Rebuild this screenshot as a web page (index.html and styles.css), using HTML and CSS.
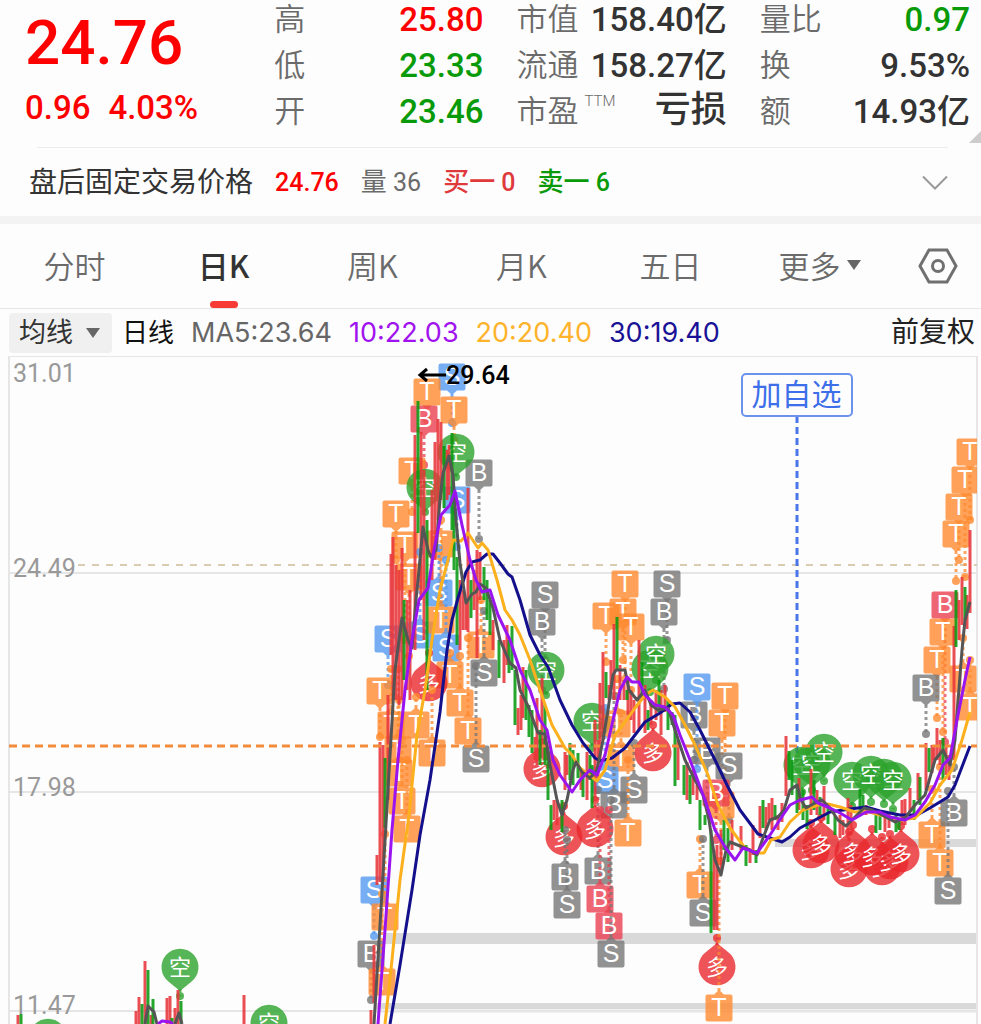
FILE: index.html
```html
<!DOCTYPE html>
<html lang="zh-CN">
<head>
<meta charset="utf-8">
<meta name="viewport" content="width=device-width, initial-scale=1">
<title>日K 行情</title>
<link rel="stylesheet" href="styles.css">
</head>
<body>
<main class="page">
  <section class="quote">
    <div class="price">
      <div class="price-now">24.76</div>
      <div class="price-change"><span>0.96</span><span>4.03%</span></div>
    </div>
    <dl class="stats">
      <div class="stat"><dt>高</dt><dd class="up">25.80</dd></div>
      <div class="stat"><dt>低</dt><dd class="down">23.33</dd></div>
      <div class="stat"><dt>开</dt><dd class="down">23.46</dd></div>
    </dl>
    <dl class="stats">
      <div class="stat"><dt>市值</dt><dd>158.40亿</dd></div>
      <div class="stat"><dt>流通</dt><dd>158.27亿</dd></div>
      <div class="stat"><dt>市盈<sup class="ttm">TTM</sup></dt><dd class="word">亏损</dd></div>
    </dl>
    <dl class="stats">
      <div class="stat"><dt>量比</dt><dd class="down">0.97</dd></div>
      <div class="stat"><dt>换</dt><dd>9.53%</dd></div>
      <div class="stat"><dt>额</dt><dd>14.93亿</dd></div>
    </dl>
    <svg class="corner" viewBox="0 0 12 12" aria-hidden="true"><path d="M12 0V12H0Z"/></svg>
  </section>

  <section class="after">
    <span class="after-title">盘后固定交易价格</span>
    <span class="up">24.76</span>
    <span class="volume"><span class="han">量</span> 36</span>
    <span class="bid"><span class="han">买一</span> 0</span>
    <span class="down"><span class="han">卖一</span> 6</span>
    <button class="expand" type="button" aria-label="展开">
      <svg viewBox="0 0 26 16" aria-hidden="true"><path d="M1 1.500L13 13.500L25 1.500"/></svg>
    </button>
  </section>

  <nav class="tabs">
    <button class="tab" type="button">分时</button>
    <button class="tab active" type="button">日K</button>
    <button class="tab" type="button">周K</button>
    <button class="tab" type="button">月K</button>
    <button class="tab" type="button">五日</button>
    <button class="tab" type="button">更多<i class="caret"></i></button>
    <button class="settings" type="button" aria-label="设置">
      <svg viewBox="0 0 40 36" aria-hidden="true"><path d="M11 2H29L38 18L29 34H11L2 18Z"/><circle cx="20" cy="18" r="5.500"/></svg>
    </button>
  </nav>

  <section class="legend">
    <label class="picker">
      <select class="picker-select" aria-label="指标"><option>均线</option></select>
      <i class="caret"></i>
    </label>
    <span class="period">日线</span>
    <span class="ma ma5">MA5:23.64</span>
    <span class="ma ma10">10:22.03</span>
    <span class="ma ma20">20:20.40</span>
    <span class="ma ma30">30:19.40</span>
    <span class="adjust">前复权</span>
  </section>

  <section class="chart">
    <svg class="chart-svg" id="chart" viewBox="0 356 981 668" role="img" aria-label="日K线图"></svg>
    <button class="watch" type="button">加自选</button>
  </section>
</main>
<script src="chart.js"></script>
</body>
</html>
```
FILE: styles.css
```css
* { box-sizing: border-box; }

body {
  margin: 0;
  background: #fdfdfd;
  color: #333;
  font-family: Roboto, "Noto Sans CJK SC", sans-serif;
}

button, select {
  margin: 0;
  padding: 0;
  border: 0;
  background: none;
  color: inherit;
  font: inherit;
}

.page { overflow: hidden; }

.up { color: #fe0000; }
.down { color: #089a08; }

.quote {
  position: relative;
  display: grid;
  grid-template-columns: 216fr 209fr 210fr 210fr;
  column-gap: 33px;
  height: 147px;
  padding: 0 11px 0 25px;
}

.price {
  color: #fe0000;
  font-weight: 500;
  white-space: nowrap;
}

.price-now {
  padding-top: 8px;
  font-size: 62px;
  line-height: 70px;
}

.price-change {
  display: flex;
  gap: 18px;
  padding-top: 10px;
  font-size: 33px;
  line-height: 40px;
}

.stats {
  display: grid;
  grid-auto-rows: 40px;
  row-gap: 6px;
  align-content: start;
  margin: 0;
}

.stat {
  display: flex;
  justify-content: space-between;
  font-size: 33px;
  line-height: 40px;
  white-space: nowrap;
}

.stat dt {
  color: #6b6b6b;
  font-size: 31px;
  font-weight: 350;
}

.stat dd {
  margin: 0;
  font-weight: 500;
}

.stat .word { font-size: 36px; line-height: 36px; }

.ttm {
  padding-left: 6px;
  font-size: 15px;
  line-height: 14px;
  vertical-align: 16px;
}

.corner {
  position: absolute;
  right: 0;
  bottom: 4px;
  width: 12px;
  height: 12px;
  fill: #ccc;
}

.after {
  display: flex;
  align-items: center;
  gap: 22px;
  height: 77px;
  padding: 2px 33px 0 29px;
  border-bottom: 8px solid #f3f3f3;
  background: linear-gradient(#ececec, #ececec) 37px 0 / calc(100% - 70px) 1px no-repeat;
  font-size: 25px;
  font-weight: 500;
  line-height: 36px;
  white-space: nowrap;
}

.after-title { font-size: 28px; font-weight: 400; }
.han { font-size: 26px; }
.volume { color: #6b6b6b; font-weight: 400; }
.bid { color: #e0393c; }

.expand { margin-left: auto; }
.expand svg {
  display: block;
  width: 26px;
  height: 16px;
  fill: none;
  stroke: #999;
  stroke-width: 2;
}

.tabs {
  display: grid;
  grid-template-columns: repeat(6, 149fr) 87fr;
  height: 85px;
  border-bottom: 1px solid #e6e6e6;
}

.tab {
  position: relative;
  display: flex;
  align-items: center;
  justify-content: center;
  gap: 6px;
  padding-bottom: 3px;
  color: #6b6b6b;
  font-family: "Noto Sans CJK SC", sans-serif;
  font-size: 31px;
  font-weight: 350;
}

.tab.active { color: #333; font-weight: 500; }
.tab.active::after {
  content: "";
  position: absolute;
  bottom: 0;
  width: 28px;
  height: 7px;
  border-radius: 4px;
  background: #f83a36;
}

.caret {
  display: inline-block;
  border: 7px solid transparent;
  border-top: 10px solid #666;
  border-bottom: 0;
}

.settings {
  display: flex;
  align-items: center;
  justify-content: center;
}
.settings svg {
  width: 40px;
  height: 36px;
  fill: none;
  stroke: #707070;
  stroke-width: 3;
}

.legend {
  display: flex;
  align-items: center;
  height: 47px;
  padding: 0 6px 0 9px;
  font-size: 26px;
  line-height: 40px;
  white-space: nowrap;
}

.picker {
  display: flex;
  align-items: center;
  height: 40px;
  padding: 0 12px 0 10px;
  border-radius: 4px;
  background: #f0f0f0;
}
.picker-select {
  width: 67px;
  height: 40px;
  appearance: none;
  font-size: 27px;
}

.period { margin-left: 10px; color: #111; }
.ma { margin-left: 17px; font-family: Inter, sans-serif; font-size: 27px; }
.ma5 { color: #666; }
.ma10 { color: #a113ee; }
.ma20 { color: #fdb32c; }
.ma30 { color: #1a1296; }
.adjust { margin-left: auto; color: #222; font-size: 28px; }

.chart { position: relative; }
.chart-svg { display: block; width: 100%; height: auto; }

.watch {
  position: absolute;
  top: 2.5%;
  left: 81.2%;
  transform: translateX(-50%);
  width: 112px;
  height: 44px;
  border: 2px solid #6c93ec;
  border-radius: 5px;
  background: #fdfdfd;
  color: #3d6fea;
  font-size: 30px;
  line-height: 38px;
}

.grid-line { fill: none; stroke: #e6e6e6; stroke-width: 2; }
.gap-band { fill: #d9d9d9; }
.gap-band.light { fill: #f0f0f0; }
.cost-line { stroke: #d9ccb0; stroke-width: 2; stroke-dasharray: 7 7; }
.last-line { stroke: #f28b3c; stroke-width: 3; stroke-dasharray: 8 5; }
.watch-line { stroke: #4a76ea; stroke-width: 3; stroke-dasharray: 7 4; }
.axis { fill: #999; font-size: 25px; }
.peak { fill: #000; font-size: 25px; font-weight: 500; }
.peak-arrow { fill: none; stroke: #000; stroke-width: 3; }

.candle { stroke-width: 3; }
.candle.r { stroke: #e8363a; stroke-opacity: .88; }
.candle.g { stroke: #089a10; stroke-opacity: .88; }

.line { fill: none; stroke-width: 3; stroke-linejoin: round; }
.line-5 { stroke: #555; }
.line-10 { stroke: #9a14f0; }
.line-20 { stroke: #fdb01e; }
.line-30 { stroke: #14108c; }

.mark-shape { opacity: .8; }
.mark-stem { stroke-width: 3; stroke-dasharray: 3 3; opacity: .75; }
.mark-text { fill: #fff; font-family: "Liberation Sans", "Noto Sans CJK SC", sans-serif; font-size: 25px; text-anchor: middle; }
.mark-text.pin { font-size: 22px; }
```
FILE: chart.js
```js
const NS = 'http://www.w3.org/2000/svg';
const root = document.getElementById('chart');

function add(name, attrs, text) {
  const node = document.createElementNS(NS, name);
  for (const key in attrs) node.setAttribute(key, attrs[key]);
  if (text) node.textContent = text;
  root.appendChild(node);
  return node;
}

function hline(cls, y, x1, x2) {
  add('line', { class: cls, x1: x1, x2: x2, y1: y, y2: y });
}

// Frame, grid and gap bands
add('rect', { class: 'gap-band', x: 775, y: 839, width: 201, height: 8 });
add('rect', { class: 'gap-band', x: 384, y: 933, width: 592, height: 11 });
add('rect', { class: 'gap-band light', x: 376, y: 1008, width: 600, height: 5 });
add('rect', { class: 'gap-band', x: 376, y: 1003, width: 600, height: 6 });
add('path', { class: 'grid-line', d: 'M9 1024V356H977V1024' });
[573, 792, 1011].forEach(y => hline('grid-line', y, 9, 977));
hline('cost-line', 565, 78, 977);
[['31.01', 382], ['24.49', 577], ['17.98', 796], ['11.47', 1014]]
  .forEach(a => add('text', { class: 'axis', x: 13, y: a[1] }, a[0]));
add('line', { class: 'watch-line', x1: 797, x2: 797, y1: 416, y2: 768 });

const FILL = { o: '#ff892e', k: '#777', r: '#ea4050', b: '#559af0', G: '#2ca32c', R: '#e8282d' };

// Signal marks: letter, colour, x, y, y of the bar the stem points to
const marks = [
  ['S','b',452,377,423],['T','o',454,410,440],['T','o',427,392,420],['B','r',424,419,465],
  ['T','o',412,471,512],['T','o',396,514,560],['T','o',405,545,640],['T','o',440,544,600],
  ['S','b',457,500,547],['B','k',479,473,539],['空','G',456,452,477],['空','G',425,487,512],
  ['T','o',409,577,656],['S','b',439,593,548],['S','b',388,639,685],['S','b',420,635,552],
  ['T','o',441,620,520],['T','o',481,645,600],['S','b',446,648,560],['T','o',450,675,653],
  ['T','o',380,691,737],['T','o',391,725,669],['多','R',429,683,653],['T','o',416,725,697],
  ['T','o',460,703,656],['T','o',468,731,638],['T','o',432,753,690],['T','o',398,750,669],
  ['T','o',399,773,700],['T','o',402,801,740],['T','o',407,829,760],
  ['S','k',484,673,611],['S','k',476,759,666],
  ['S','b',374,890,936],['T','o',385,917,834],['B','k',371,954,1000],['T','o',382,982,894],
  ['S','k',545,595,660],['B','k',542,622,690],['空','G',546,670,695],
  ['T','o',606,616,662],['T','o',625,584,679],['T','o',623,612,660],['T','o',631,627,690],
  ['S','k',667,584,640],['B','k',664,612,689],['空','G',650,668,692],['空','G',656,654,680],
  ['空','G',592,721,748],['T','o',617,724,679],['T','o',621,758,713],['S','b',605,780,708],
  ['B','k',614,805,696],['S','k',634,790,743],['T','o',628,833,760],
  ['B','k',694,715,760],['S','b',697,687,769],['T','o',725,696,790],['T','o',722,723,800],
  ['B','k',707,751,800],['S','k',729,766,820],['T','o',721,805,861],['B','r',716,793,840],
  ['多','R',653,753,725],['多','R',542,769,742],['多','R',564,837,806],
  ['B','k',598,871,790],['多','R',595,829,800],
  ['B','k',565,877,830],['S','k',567,905,840],['B','r',600,899,810],['B','r',609,926,810],
  ['S','k',611,954,800],['T','o',700,885,839],['S','k',703,913,839],
  ['多','R',717,967,938],['T','o',719,1008,861],
  ['空','G',802,765,792],['空','G',812,763,790],['空','G',824,752,781],
  ['空','G',852,780,806],['空','G',884,777,804],['空','G',871,774,802],['空','G',893,780,809],
  ['多','R',811,850,823],['多','R',821,845,818],['多','R',849,869,832],['多','R',853,853,825],
  ['多','R',882,867,837],['多','R',872,857,829],['多','R',890,861,834],['多','R',901,854,826],
  ['T','o',970,452,520],['T','o',965,480,577],['T','o',959,507,560],['T','o',956,534,581],
  ['B','r',945,605,742],['T','o',943,632,732],['T','o',937,660,718],['B','k',926,688,734],
  ['T','o',963,679,638],['T','o',970,707,660],['T','o',932,835,789],['T','o',940,863,767],
  ['B','k',954,813,767],['S','k',948,891,791],
  ['空','G',180,967,996],['空','G',269,1023,1050],['空','G',48,1037,1060]
];

const clip = add('clipPath', { id: 'plot' });
const box = document.createElementNS(NS, 'rect');
[['x', 9], ['y', 356], ['width', 968], ['height', 668]].forEach(a => box.setAttribute(a[0], a[1]));
clip.appendChild(box);

marks.forEach(([letter, tone, x, y, target]) => {
  const fill = FILL[tone];
  const pin = tone === 'G' || tone === 'R';
  const dir = target > y ? 1 : -1;
  const r = pin ? 18 : 13;
  add('line', { class: 'mark-stem', stroke: fill, x1: x, x2: x, y1: y + dir * (r + 4), y2: target });
  add('circle', { class: 'mark-shape', fill: fill, cx: x, cy: target, r: 4 });
  const tip = y + dir * (r + (pin ? 6 : 5));
  const d = pin
    ? `M${x} ${tip}L${x - dir * 11} ${y + dir * 15}A18.500 18.500 0 1 1 ${x + dir * 11} ${y + dir * 15}Z`
    : `M${x - 11.5} ${y - 13.5}h23q2 0 2 2v23q0 2 -2 2h-23q-2 0 -2 -2v-23q0 -2 2 -2ZM${x - 5} ${y + dir * 13.5}L${x} ${tip}L${x + 5} ${y + dir * 13.5}Z`;
  add('path', { class: 'mark-shape', fill: fill, d: d, 'clip-path': 'url(#plot)' });
  add('text', { class: pin ? 'mark-text pin' : 'mark-text', x: x, y: y + 8, 'clip-path': 'url(#plot)' }, letter);
});

// Bars: x, top, bottom
const bars = {
  r: [[18,1015,1024],[136,1011,1024],[139,997,1024],[145,961,1024],[151,1015,1024],[167,998,1024],[170,996,1024],[175,1008,1024],[178,990,1024],[244,995,1024],
    [371,1010,1024],[374,945,1003],[377,855,885],[380,742,882],[383,745,880],[388,695,800],[391,554,655],[393,537,700],[396,565,700],[399,570,705],[402,548,700],[407,600,690],[410,590,700],[415,435,650],[421,432,600],[424,470,640],[432,490,580],[435,442,560],[438,419,520],[441,422,500],[447,450,500],[449,445,495],
    [460,580,650],[463,590,630],[466,600,630],[468,488,632],[474,570,610],[477,550,658],[480,552,600],[493,620,650],[504,640,683],[507,625,665],[518,708,735],[521,695,730],[523,667,718],[535,737,760],[537,698,765],[542,678,745],[554,800,820],[557,800,825],[565,752,790],[567,755,775],[581,770,790],[587,752,800],[595,720,800],[598,740,780],[600,683,760],[603,652,740],[609,685,700],[611,660,690],[614,624,700],[620,665,700],[624,680,700],[628,680,715],[631,690,720],[634,700,733],[639,640,730],[645,685,733],[651,700,725],[656,690,720],[661,690,735],[665,685,712],
    [678,740,780],[687,762,800],[693,770,795],[697,785,800],[714,850,930],[717,845,930],[721,830,870],[732,820,850],[741,826,850],[750,852,863],[753,825,855],[760,806,838],[766,807,830],[769,803,820],[772,798,830],[778,815,830],[782,803,822],[786,736,796],[799,778,810],[811,769,815],[817,790,815],[824,786,820],[840,815,838],[843,820,835],[848,798,838],[851,805,830],[866,805,815],[885,815,832],[889,812,828],[902,800,825],[905,799,825],[910,788,812],[918,773,800],[926,743,790],[932,745,773],[934,745,760],[937,728,760],[940,740,765],[946,745,775],[949,755,780],[954,626,760],[959,600,640],[962,577,625],[967,595,629],[970,530,613]],
  g: [[21,1014,1024],[142,1004,1024],[148,970,1024],[153,999,1024],[172,1018,1024],[181,1001,1024],
    [385,758,828],[404,600,680],[418,401,533],[427,520,690],[444,446,508],[452,433,530],[454,500,570],[457,557,645],[471,580,618],[484,567,600],[487,580,620],[490,600,635],[499,640,678],[509,640,673],[512,626,670],[515,670,725],[526,670,720],[529,705,737],[532,710,753],[540,730,765],[545,705,765],[548,745,800],[551,805,830],[562,800,832],[570,743,780],[573,750,785],[578,753,778],[583,770,797],[590,755,780],[592,765,808],[606,672,698],[617,617,670],[627,690,700],[642,662,700],[648,710,730],[659,680,712],[668,700,730],[672,712,725],[675,715,786],[684,765,795],[690,775,804],
    [700,800,830],[705,815,825],[711,830,933],[724,820,850],[728,828,862],[746,845,866],[756,850,863],[763,800,828],[775,805,820],[789,751,780],[792,760,795],[797,785,813],[803,790,820],[807,805,829],[814,780,810],[820,797,815],[828,806,824],[835,816,835],[860,789,815],[863,795,812],[876,815,833],[880,815,830],[896,815,832],[899,818,830],[914,800,820],[920,777,805],[929,748,772],[943,738,780],[956,590,647],[965,587,620]]
};
Object.keys(bars).forEach(tone => bars[tone].forEach(b =>
  add('line', { class: 'candle ' + tone, x1: b[0], x2: b[0], y1: b[1], y2: b[2] })));

hline('last-line', 746, 9, 977);

const averages = [
  ['line-5', '145,1024 148,1006 154,1012 157,1024'],
  ['line-5', '175,1024 179,1013 182,1024'],
  ['line-10', '158,1024 162,1021 170,1022 173,1024'],
  ['line-30', '390,1024 400,965 412,890 420,835 430,780 440,712 447,650 452,620 458,598 466,572 472,562 480,560 487,554 493,554 500,563 508,574 512,577 520,600 530,635 540,655 548,667 560,700 572,725 583,743 595,758 600,761 612,758 625,748 635,735 645,722 660,713 672,704 680,703 690,712 700,730 715,760 727,785 740,810 758,834 770,838 782,842 790,837 800,828 815,820 830,812 850,809 866,807 880,811 900,815 917,815 930,808 948,797 955,785 970,746'],
  ['line-20', '385,1024 392,960 400,880 409,815 417,735 425,690 432,640 440,590 448,560 453,540 461,541 468,533 478,548 482,543 488,550 497,580 505,610 512,620 520,635 530,660 540,690 552,725 565,748 572,755 580,768 597,781 605,770 615,735 625,722 635,708 645,695 653,690 665,697 675,707 685,725 695,745 708,775 718,805 730,828 745,848 757,853 764,853 771,840 780,837 790,822 803,810 818,805 828,804 840,807 855,812 866,811 880,815 900,820 915,818 930,803 940,785 952,770 962,740 970,712'],
  ['line-5', '374,1024 380,925 388,790 395,670 402,618 408,640 412,648 416,600 419,570 423,527 428,550 431,557 436,550 440,500 443,473 449,456 453,475 456,520 460,563 466,603 472,594 476,592 480,584 486,588 493,608 500,640 510,663 516,668 520,690 528,706 538,733 545,734 550,765 557,800 562,815 567,800 573,770 576,762 582,772 590,778 597,770 603,740 608,710 613,675 616,670 625,670 629,690 637,700 645,690 651,705 658,710 668,708 675,730 685,760 695,780 703,795 709,820 715,860 721,875 726,850 730,842 740,846 750,850 757,855 763,838 770,820 778,817 784,810 790,790 797,785 801,800 806,808 815,803 822,800 830,808 838,820 846,826 854,818 864,808 872,810 882,815 895,822 905,818 915,805 925,795 935,760 943,750 950,765 955,740 962,650 965,620 970,602'],
  ['line-10', '378,1024 385,930 392,830 398,760 405,690 412,640 419,600 428,588 434,550 441,515 450,505 455,491 462,525 470,560 476,580 482,592 490,590 498,615 510,640 520,670 530,690 540,720 547,730 553,760 560,775 572,792 580,780 590,770 597,775 605,755 613,720 620,690 627,677 632,682 639,682 645,695 655,705 665,707 673,715 680,735 690,760 705,800 715,830 725,847 735,860 743,848 757,853 770,835 783,815 790,805 800,800 812,797 818,803 830,808 840,813 852,820 866,812 880,812 890,817 905,820 915,815 925,802 935,785 943,765 950,758 958,715 965,680 970,657']
];
averages.forEach(a => add('polyline', { class: 'line ' + a[0], points: a[1] }));

add('path', { class: 'peak-arrow', d: 'M446 375H420M427 369L420 375L427 381' });
add('text', { class: 'peak', x: 446, y: 384 }, '29.64');
```
